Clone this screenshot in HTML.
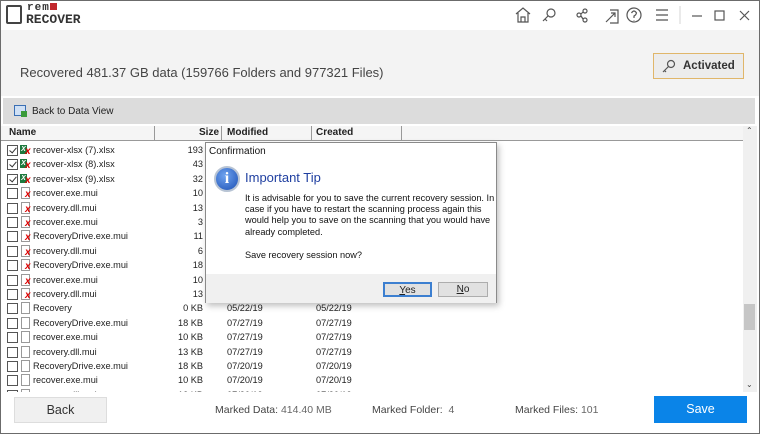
<!DOCTYPE html>
<html><head><meta charset="utf-8"><style>
*{margin:0;padding:0;box-sizing:border-box}
body{width:760px;height:434px;overflow:hidden;font-family:"Liberation Sans",sans-serif;background:#fff;position:relative;color:#222}
.a{position:absolute}
.frame{left:0;top:0;width:760px;height:434px;border:1px solid #6b6b6b}
.row{position:absolute;left:0;height:14.4px;width:740px;font-size:9.2px;line-height:15px}
.cb{position:absolute;left:7px;top:2px;width:11px;height:11px;border:1px solid #555;background:#fff}
.cb.c::after{content:"";position:absolute;left:3px;top:0px;width:3px;height:6px;border:solid #333;border-width:0 1px 1px 0;transform:rotate(40deg)}
.doc{position:absolute;left:21px;top:1px;width:9px;height:12px;border:1px solid #999;background:#fff}
.xl{position:absolute;left:20px;top:2px;width:7px;height:9px;background:#1d7a3e;color:#fff;font-size:7px;line-height:9px;text-align:center;font-weight:bold}
.x{position:absolute;left:25px;top:4px;color:#d00;font-size:10px;font-weight:bold;line-height:10px}
.nm{position:absolute;left:33px}
.sz{position:absolute;right:537px;text-align:right}
.md{position:absolute;left:227px}
.cr{position:absolute;left:316px}
.btn{position:absolute;font-size:10px;text-align:center;border:1px solid #adadad;background:#e1e1e1;line-height:13px}
</style></head><body>
<div class="a" style="left:6px;top:5px;width:16px;height:19px;border:2px solid #444;border-radius:2px"></div>
<div class="a" style="left:27px;top:2px;font:bold 11px 'Liberation Mono',monospace;color:#333;letter-spacing:1px">rem<span style="display:inline-block;width:7px;height:7px;background:#c1272d"></span></div>
<div class="a" style="left:26px;top:12px;font:bold 13px 'Liberation Mono',monospace;color:#333">RECOVER</div>
<svg class="a" style="left:510px;top:4px" width="250" height="22" viewBox="0 0 250 22" fill="none" stroke="#555" stroke-width="1.2">
<path d="M6 10 L13 4 L20 10 M8 9 V18 H18 V9 M11 18 V13 H15 V18"/>
<circle cx="41" cy="9" r="4"/><path d="M38 12 L33 17 M35 15 L37 17"/>
<circle cx="75" cy="7" r="2"/><circle cx="69" cy="11" r="2"/><circle cx="75" cy="16" r="2"/><path d="M73 8 L71 10 M71 12 L73 15"/>
<path d="M100 6 H108 V19 H100 M96 18 L105 9 M101 9 H105 V13"/>
<circle cx="124" cy="11" r="7"/><path d="M121.5 9 Q124 5 126.5 9 Q126 11 124 12 V14 M124 16 V16.5"/>
<path d="M146 6 H158 M146 11 H158 M146 16 H158"/>
<path d="M170 2 V20" stroke="#ddd"/>
<path d="M182 12 H192"/><rect x="205" y="7" width="9" height="9"/><path d="M230 7 L239 16 M239 7 L230 16"/>
</svg>
<div class="a" style="left:1px;top:30px;width:758px;height:66px;background:#f3f3f3"></div>
<div class="a" style="left:20px;top:65px;font-size:13px;color:#444">Recovered 481.37 GB data (159766 Folders and 977321 Files)</div>
<div class="a" style="left:653px;top:53px;width:91px;height:26px;border:1px solid #e0b66a;background:#ececec;font-size:11.5px;font-weight:bold;color:#333;line-height:24px;padding-left:29px">Activated</div>
<svg class="a" style="left:660px;top:58px" width="18" height="16" fill="none" stroke="#555" stroke-width="1.2"><circle cx="11" cy="6" r="3.5"/><path d="M8.5 8.5 L3 14 M4.5 12.5 L6 14"/></svg>
<div class="a" style="left:1px;top:96px;width:758px;height:3px;background:#fff"></div>
<div class="a" style="left:3px;top:98px;width:752px;height:26px;background:#dcdcdc"></div>
<div class="a" style="left:14px;top:105px;width:12px;height:11px;border:1px solid #3a6fb4;background:#cfe0f5"></div>
<div class="a" style="left:21px;top:111px;width:6px;height:6px;background:#3a9a3a"></div>
<div class="a" style="left:32px;top:106px;font-size:10px;color:#222">Back to Data View</div>
<div class="a" style="left:1px;top:126px;width:742px;height:15px;background:#f5f5f5;border-bottom:1px solid #999;font-size:10px;font-weight:bold;line-height:14px">
<span class="a" style="left:8px">Name</span><span class="a" style="left:198px">Size</span><span class="a" style="left:226px">Modified</span><span class="a" style="left:315px">Created</span>
<span class="a" style="left:153px;top:0;width:1px;height:14px;background:#999"></span>
<span class="a" style="left:220px;top:0;width:1px;height:14px;background:#999"></span>
<span class="a" style="left:310px;top:0;width:1px;height:14px;background:#999"></span>
<span class="a" style="left:400px;top:0;width:1px;height:14px;background:#999"></span>
</div>
<div class="a" style="left:743px;top:126px;width:14px;height:266px;background:#f0f0f0"></div>
<div class="a" style="left:744px;top:304px;width:11px;height:26px;background:#c6c6c6"></div>
<div class="a" style="left:746px;top:126px;font-size:8px;color:#444">&#8963;</div>
<div class="a" style="left:746px;top:380px;font-size:8px;color:#444">&#8964;</div>
<div class="a" style="left:0;top:143px;width:742px;height:249px;overflow:hidden">
<div class="row" style="top:0"><i class="cb c"></i><i class="xl">X</i><i class="x">x</i><span class="nm">recover-xlsx (7).xlsx</span><span class="sz">193</span></div>
<div class="row" style="top:14.4px"><i class="cb c"></i><i class="xl">X</i><i class="x">x</i><span class="nm">recover-xlsx (8).xlsx</span><span class="sz">43</span></div>
<div class="row" style="top:28.8px"><i class="cb c"></i><i class="xl">X</i><i class="x">x</i><span class="nm">recover-xlsx (9).xlsx</span><span class="sz">32</span></div>
<div class="row" style="top:43.2px"><i class="cb"></i><i class="doc"></i><i class="x">x</i><span class="nm">recover.exe.mui</span><span class="sz">10</span></div>
<div class="row" style="top:57.6px"><i class="cb"></i><i class="doc"></i><i class="x">x</i><span class="nm">recovery.dll.mui</span><span class="sz">13</span></div>
<div class="row" style="top:72px"><i class="cb"></i><i class="doc"></i><i class="x">x</i><span class="nm">recover.exe.mui</span><span class="sz">3</span></div>
<div class="row" style="top:86.4px"><i class="cb"></i><i class="doc"></i><i class="x">x</i><span class="nm">RecoveryDrive.exe.mui</span><span class="sz">11</span></div>
<div class="row" style="top:100.8px"><i class="cb"></i><i class="doc"></i><i class="x">x</i><span class="nm">recovery.dll.mui</span><span class="sz">6</span></div>
<div class="row" style="top:115.2px"><i class="cb"></i><i class="doc"></i><i class="x">x</i><span class="nm">RecoveryDrive.exe.mui</span><span class="sz">18</span></div>
<div class="row" style="top:129.6px"><i class="cb"></i><i class="doc"></i><i class="x">x</i><span class="nm">recover.exe.mui</span><span class="sz">10</span></div>
<div class="row" style="top:144px"><i class="cb"></i><i class="doc"></i><i class="x">x</i><span class="nm">recovery.dll.mui</span><span class="sz">13</span></div>
<div class="row" style="top:158.4px"><i class="cb"></i><i class="doc"></i><span class="nm">Recovery</span><span class="sz">0 KB</span><span class="md">05/22/19</span><span class="cr">05/22/19</span></div>
<div class="row" style="top:172.8px"><i class="cb"></i><i class="doc"></i><span class="nm">RecoveryDrive.exe.mui</span><span class="sz">18 KB</span><span class="md">07/27/19</span><span class="cr">07/27/19</span></div>
<div class="row" style="top:187.2px"><i class="cb"></i><i class="doc"></i><span class="nm">recover.exe.mui</span><span class="sz">10 KB</span><span class="md">07/27/19</span><span class="cr">07/27/19</span></div>
<div class="row" style="top:201.6px"><i class="cb"></i><i class="doc"></i><span class="nm">recovery.dll.mui</span><span class="sz">13 KB</span><span class="md">07/27/19</span><span class="cr">07/27/19</span></div>
<div class="row" style="top:216px"><i class="cb"></i><i class="doc"></i><span class="nm">RecoveryDrive.exe.mui</span><span class="sz">18 KB</span><span class="md">07/20/19</span><span class="cr">07/20/19</span></div>
<div class="row" style="top:230.4px"><i class="cb"></i><i class="doc"></i><span class="nm">recover.exe.mui</span><span class="sz">10 KB</span><span class="md">07/20/19</span><span class="cr">07/20/19</span></div>
<div class="row" style="top:244.8px"><i class="cb"></i><i class="doc"></i><span class="nm">recovery.dll.mui</span><span class="sz">13 KB</span><span class="md">07/20/19</span><span class="cr">07/20/19</span></div>
</div>
<div class="a" style="left:205px;top:142px;width:292px;height:161px;background:#fff;border:1px solid #8a8a8a;box-shadow:2px 3px 6px rgba(0,0,0,.25)">
<div class="a" style="left:3px;top:3px;font-size:10px;color:#111">Confirmation</div>
<div class="a" style="left:8px;top:23px;width:26px;height:26px;border-radius:50%;background:radial-gradient(circle at 40% 35%,#6fa3ef,#1b4fb4);border:2px solid #b8c4d4;color:#fff;font:bold 16px 'Liberation Serif',serif;text-align:center;line-height:22px">i</div>
<div class="a" style="left:39px;top:27px;font-size:13px;color:#1f3fa0">Important Tip</div>
<div class="a" style="left:39px;top:50px;width:250px;font-size:9.2px;line-height:11.2px;color:#111">It is advisable for you to save the current recovery session. In case if you have to restart the scanning process again this would help you to save on the scanning that you would have already completed.</div>
<div class="a" style="left:39px;top:107px;font-size:9.2px;color:#111">Save recovery session now?</div>
<div class="a" style="left:0;top:131px;width:290px;height:29px;background:#f0f0f0"></div>
<div class="btn" style="left:177px;top:139px;width:49px;height:15px;border:2px solid #3c7fd0"><u>Y</u>es</div>
<div class="btn" style="left:232px;top:139px;width:50px;height:15px"><u>N</u>o</div>
</div>
<div class="a" style="left:14px;top:397px;width:93px;height:26px;background:#f0f0f0;border:1px solid #ddd;font-size:12.5px;text-align:center;line-height:24px;color:#333">Back</div>
<div class="a" style="left:215px;top:404px;font-size:10.5px;color:#444">Marked Data: <span style="color:#666">414.40 MB</span></div>
<div class="a" style="left:372px;top:404px;font-size:10.5px;color:#444">Marked Folder:&nbsp; <span style="color:#666">4</span></div>
<div class="a" style="left:515px;top:404px;font-size:10.5px;color:#444">Marked Files: <span style="color:#666">101</span></div>
<div class="a" style="left:654px;top:396px;width:93px;height:27px;background:#0a84e8;color:#fff;font-size:12.5px;text-align:center;line-height:27px">Save</div>
<div class="a frame"></div>
</body></html>
